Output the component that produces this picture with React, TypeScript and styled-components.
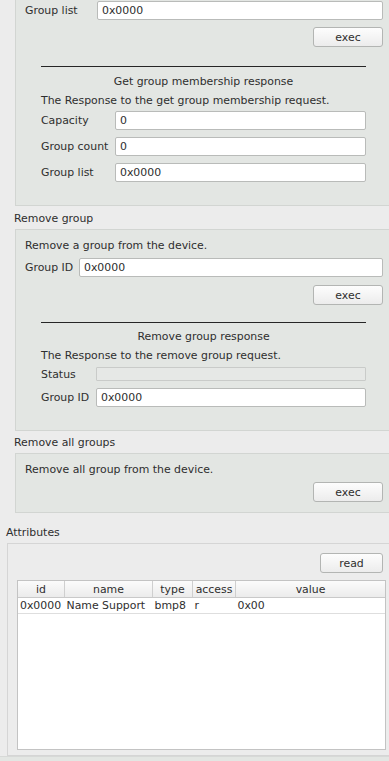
import * as React from 'react';
import styled, { createGlobalStyle } from 'styled-components';

const GlobalStyle = createGlobalStyle`
  html, body {
    margin: 0;
    padding: 0;
    background: #ececec;
  }
  body {
    font-family: 'DejaVu Sans', 'Noto Sans', sans-serif;
    font-size: 10.9px;
    color: #2e2e2e;
  }
`;

const Page = styled.div`
  width: 389px;
  height: 761px;
  overflow: hidden;
  display: flex;
  flex-direction: column;
  background: #ececec;
`;

const GroupBox = styled.section<{ $cut?: boolean; $height: number; $bottom: number }>`
  box-sizing: border-box;
  flex: none;
  margin-left: 15px;
  width: 378px;
  height: ${(p) => p.$height}px;
  padding: 0 9px ${(p) => p.$bottom}px 9px;
  background: #e3e6e3;
  border: 1px solid #d2d5d2;
  border-top: ${(p) => (p.$cut ? 'none' : '1px solid #d2d5d2')};
  display: flex;
  flex-direction: column;
`;

const SectionTitle = styled.div<{ $height: number; $top: number; $left: number }>`
  box-sizing: border-box;
  flex: none;
  height: ${(p) => p.$height}px;
  padding: ${(p) => p.$top}px 0 0 ${(p) => p.$left}px;
  line-height: 16px;
  white-space: nowrap;
`;

const Response = styled.div`
  display: flex;
  flex-direction: column;
  margin: 0 17px 0 16px;
`;

const Rule = styled.div<{ $top: number }>`
  flex: none;
  height: 1px;
  margin-top: ${(p) => p.$top}px;
  background: #262626;
`;

const Text = styled.div<{ $top: number; $center?: boolean }>`
  flex: none;
  height: 16px;
  line-height: 16px;
  margin-top: ${(p) => p.$top}px;
  text-align: ${(p) => (p.$center ? 'center' : 'left')};
  white-space: nowrap;
`;

const Row = styled.div<{ $top: number; $labelWidth: number; $height?: number }>`
  flex: none;
  display: grid;
  grid-template-columns: ${(p) => p.$labelWidth}px 1fr;
  align-items: center;
  height: ${(p) => p.$height ?? 19}px;
  margin-top: ${(p) => p.$top}px;
`;

const Label = styled.span`
  white-space: nowrap;
`;

const Input = styled.div`
  box-sizing: border-box;
  height: 19px;
  padding-left: 4px;
  line-height: 17px;
  background: #ffffff;
  border: 1px solid #b9bbb9;
  border-radius: 2px;
`;

const Display = styled.div`
  box-sizing: border-box;
  height: 14px;
  background: #e6e8e6;
  border: 1px solid #c9cbc9;
  border-radius: 1px;
`;

const Button = styled.button<{ $top: number; $width: number }>`
  flex: none;
  align-self: flex-end;
  box-sizing: border-box;
  width: ${(p) => p.$width}px;
  height: 20px;
  margin-top: ${(p) => p.$top}px;
  padding: 0;
  font-family: inherit;
  font-size: inherit;
  color: #2e2e2e;
  background: linear-gradient(#fdfdfd, #ececec);
  border: 1px solid #b3b5b3;
  border-radius: 3px;
`;

const AttrBox = styled.section`
  box-sizing: border-box;
  flex: none;
  margin-left: 7px;
  width: 386px;
  height: 213px;
  padding: 9px 9px 5px 9px;
  background: #ececec;
  border: 1px solid #d5d5d5;
  display: flex;
  flex-direction: column;
`;

const TableFrame = styled.div`
  box-sizing: border-box;
  flex: 1;
  margin-top: 7px;
  width: 369px;
  background: #ffffff;
  border: 1px solid #c3c3c3;
  overflow: hidden;
`;

const Table = styled.table`
  border-collapse: collapse;
  table-layout: fixed;
  width: 368px;
  font-size: inherit;
  color: #2e2e2e;
`;

const Th = styled.th<{ $width?: number }>`
  width: ${(p) => (p.$width ? `${p.$width}px` : 'auto')};
  height: 16px;
  padding: 0;
  font-weight: normal;
  text-align: center;
  background: linear-gradient(#fbfbfb, #ebebeb);
  border-right: 1px solid #cfcfcf;
  border-bottom: 1px solid #c9c9c9;
  white-space: nowrap;
  overflow: hidden;
`;

const Td = styled.td`
  height: 15px;
  padding: 0 0 0 2px;
  border-bottom: 1px solid #dedede;
  white-space: nowrap;
  overflow: hidden;
`;

const BottomStrip = styled.div`
  flex: 1;
  background: #e3e6e3;
  border-top: 1px solid #d7d9d7;
`;

const columns = [
  { title: 'id', width: 46 },
  { title: 'name', width: 87 },
  { title: 'type', width: 39 },
  { title: 'access', width: 42 },
  { title: 'value' },
];

const attributes = [
  { id: '0x0000', name: 'Name Support', type: 'bmp8', access: 'r', value: '0x00' },
];

const App: React.FC = () => {
  return (
    <>
      <GlobalStyle />
      <Page>
        <GroupBox $cut $height={206} $bottom={23}>
          <Row $top={1} $labelWidth={72}>
            <Label>Group list</Label>
            <Input>0x0000</Input>
          </Row>
          <Button $top={7} $width={70}>exec</Button>
          <Response>
            <Rule $top={19} />
            <Text $top={7} $center>Get group membership response</Text>
            <Text $top={3}>The Response to the get group membership request.</Text>
            <Row $top={2} $labelWidth={74}>
              <Label>Capacity</Label>
              <Input>0</Input>
            </Row>
            <Row $top={7} $labelWidth={74}>
              <Label>Group count</Label>
              <Input>0</Input>
            </Row>
            <Row $top={7} $labelWidth={74}>
              <Label>Group list</Label>
              <Input>0x0000</Input>
            </Row>
          </Response>
        </GroupBox>

        <SectionTitle $height={23} $top={5} $left={14}>Remove group</SectionTitle>
        <GroupBox $height={202} $bottom={23}>
          <Text $top={8}>Remove a group from the device.</Text>
          <Row $top={4} $labelWidth={54}>
            <Label>Group ID</Label>
            <Input>0x0000</Input>
          </Row>
          <Button $top={8} $width={70}>exec</Button>
          <Response>
            <Rule $top={17} />
            <Text $top={6} $center>Remove group response</Text>
            <Text $top={3}>The Response to the remove group request.</Text>
            <Row $top={3} $labelWidth={55} $height={14}>
              <Label>Status</Label>
              <Display />
            </Row>
            <Row $top={7} $labelWidth={55}>
              <Label>Group ID</Label>
              <Input>0x0000</Input>
            </Row>
          </Response>
        </GroupBox>

        <SectionTitle $height={22} $top={4} $left={14}>Remove all groups</SectionTitle>
        <GroupBox $height={60} $bottom={10}>
          <Text $top={8}>Remove all group from the device.</Text>
          <Button $top={4} $width={70}>exec</Button>
        </GroupBox>

        <SectionTitle $height={30} $top={12} $left={6}>Attributes</SectionTitle>
        <AttrBox>
          <Button $top={0} $width={63}>read</Button>
          <TableFrame>
            <Table>
              <thead>
                <tr>
                  {columns.map((c) => (
                    <Th key={c.title} $width={c.width}>
                      {c.title}
                    </Th>
                  ))}
                </tr>
              </thead>
              <tbody>
                {attributes.map((a) => (
                  <tr key={a.id}>
                    <Td>{a.id}</Td>
                    <Td>{a.name}</Td>
                    <Td>{a.type}</Td>
                    <Td>{a.access}</Td>
                    <Td>{a.value}</Td>
                  </tr>
                ))}
              </tbody>
            </Table>
          </TableFrame>
        </AttrBox>
        <BottomStrip />
      </Page>
    </>
  );
};

export default App;
